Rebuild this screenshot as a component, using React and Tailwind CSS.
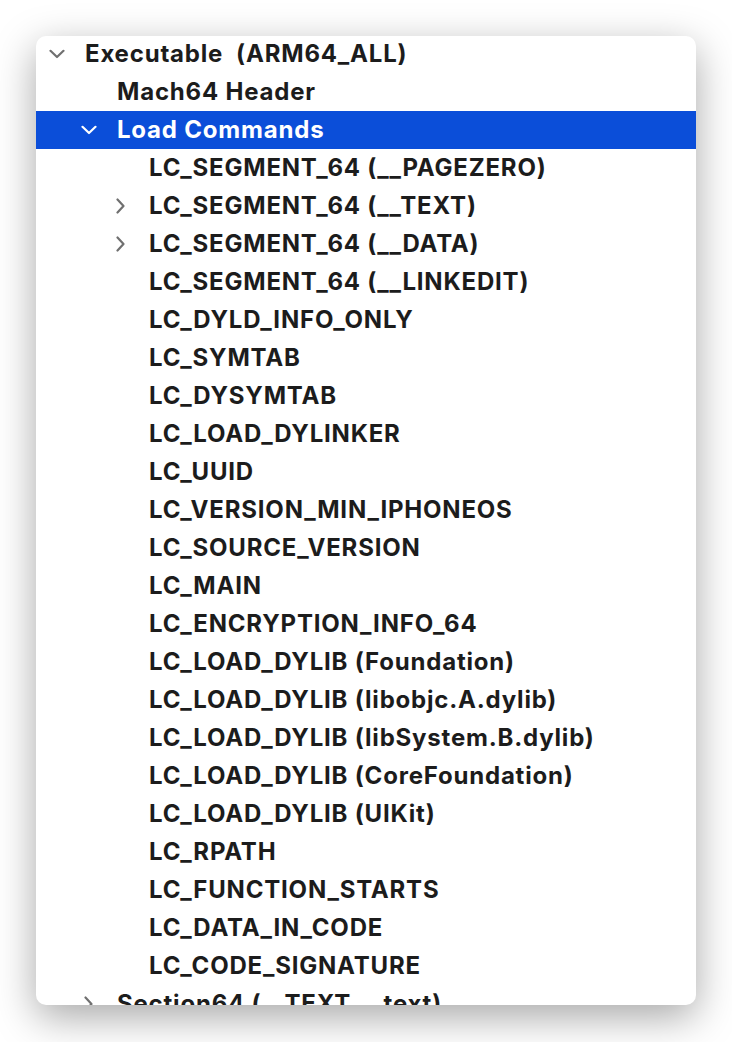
import { useState } from "react";

const items = [
  { label: "Executable  (ARM64_ALL)", level: 0, chevron: "down" },
  { label: "Mach64 Header", level: 1 },
  { label: "Load Commands", level: 1, chevron: "down", selected: true },
  { label: "LC_SEGMENT_64 (__PAGEZERO)", level: 2 },
  { label: "LC_SEGMENT_64 (__TEXT)", level: 2, chevron: "right" },
  { label: "LC_SEGMENT_64 (__DATA)", level: 2, chevron: "right" },
  { label: "LC_SEGMENT_64 (__LINKEDIT)", level: 2 },
  { label: "LC_DYLD_INFO_ONLY", level: 2 },
  { label: "LC_SYMTAB", level: 2 },
  { label: "LC_DYSYMTAB", level: 2 },
  { label: "LC_LOAD_DYLINKER", level: 2 },
  { label: "LC_UUID", level: 2 },
  { label: "LC_VERSION_MIN_IPHONEOS", level: 2 },
  { label: "LC_SOURCE_VERSION", level: 2 },
  { label: "LC_MAIN", level: 2 },
  { label: "LC_ENCRYPTION_INFO_64", level: 2 },
  { label: "LC_LOAD_DYLIB (Foundation)", level: 2 },
  { label: "LC_LOAD_DYLIB (libobjc.A.dylib)", level: 2 },
  { label: "LC_LOAD_DYLIB (libSystem.B.dylib)", level: 2 },
  { label: "LC_LOAD_DYLIB (CoreFoundation)", level: 2 },
  { label: "LC_LOAD_DYLIB (UIKit)", level: 2 },
  { label: "LC_RPATH", level: 2 },
  { label: "LC_FUNCTION_STARTS", level: 2 },
  { label: "LC_DATA_IN_CODE", level: 2 },
  { label: "LC_CODE_SIGNATURE", level: 2 },
  { label: "Section64 (__TEXT,__text)", level: 1, chevron: "right" },
];

const indents = ["pl-[13px]", "pl-[45px]", "pl-[77px]"];

const Chevron = ({ dir, selected }) => {
  const color = selected ? "#ffffff" : "#707070";
  if (dir === "down") {
    return (
      <svg width="16" height="10" viewBox="0 0 16 10" fill="none">
        <path
          d="M1.5 1.8 L8 8 L14.5 1.8"
          stroke={color}
          strokeWidth="2.2"
          strokeLinecap="round"
          strokeLinejoin="round"
        />
      </svg>
    );
  }
  return (
    <svg width="16" height="16" viewBox="0 0 16 16" fill="none">
      <path
        d="M4.5 1.5 L10.5 8 L4.5 14.5"
        stroke={color}
        strokeWidth="2.2"
        strokeLinecap="round"
        strokeLinejoin="round"
      />
    </svg>
  );
};

const Row = ({ item }) => {
  return (
    <div
      className={`flex items-center h-[38px] ${indents[item.level]} ${
        item.selected ? "bg-[#0b4ed9] text-white" : "text-[#1c1c1c]"
      }`}
    >
      <div className="w-[16px] h-[16px] flex items-center justify-center shrink-0">
        {item.chevron && <Chevron dir={item.chevron} selected={item.selected} />}
      </div>
      <span className="ml-[20px] whitespace-pre text-[24px] font-bold leading-none tracking-[0.8px]">
        {item.label}
      </span>
    </div>
  );
};

export default function App() {
  const [list] = useState(items);

  return (
    <div
      className="w-[732px] h-[1042px] bg-white pt-[36px] pl-[36px]"
      style={{ fontFamily: "Inter, 'Noto Sans', sans-serif" }}
    >
      <div className="w-[660px] h-[969px] bg-white rounded-[10px] overflow-hidden shadow-[0_12px_40px_rgba(0,0,0,0.35)]">
        <div className="-mt-[1px]">
          {list.map((item, i) => (
            <Row key={i} item={item} />
          ))}
        </div>
      </div>
    </div>
  );
}
